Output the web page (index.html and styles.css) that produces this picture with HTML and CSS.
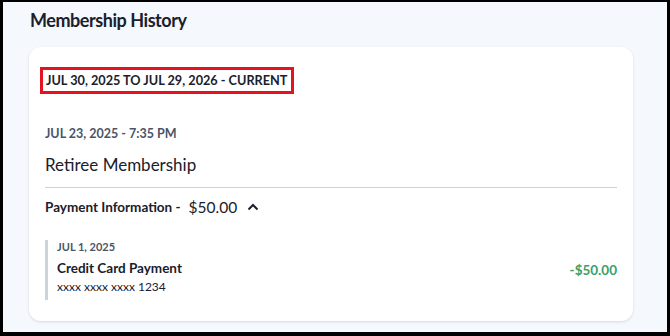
FILE: index.html
```html
<!DOCTYPE html>
<html>
<head>
<meta charset="utf-8">
<link rel="stylesheet" href="styles.css">
</head>
<body>
<div class="frame">
  <h1 class="title">Membership History</h1>
  <div class="card">
    <div class="period"><span class="period-text">JUL 30, 2025 TO JUL 29, 2026 - CURRENT</span></div>
    <div class="stamp">JUL 23, 2025 - 7:35 PM</div>
    <div class="plan">Retiree Membership</div>
    <div class="pay-head">
      <span class="pay-label">Payment Information -</span>
      <span class="pay-amount">$50.00</span>
      <svg class="chev" width="12" height="8" viewBox="0 0 12 8"><path d="M1.5 6.5 L6 2 L10.5 6.5" fill="none" stroke="#1a202c" stroke-width="2"/></svg>
    </div>
    <div class="txn">
      <div class="txn-info">
        <div class="txn-date">JUL 1, 2025</div>
        <div class="txn-name">Credit Card Payment</div>
        <div class="txn-card">xxxx xxxx xxxx 1234</div>
      </div>
      <div class="txn-amount">-$50.00</div>
    </div>
  </div>
</div>
</body>
</html>
```
FILE: styles.css
```css
html, body {
  margin: 0;
  padding: 0;
}
body {
  width: 670px;
  height: 336px;
  background: #000;
  font-family: "Lato", "Noto Sans", sans-serif;
  color: #1a202c;
}
.frame {
  box-sizing: border-box;
  margin: 2px 3px 0 3px;
  height: 330px;
  background: #f5f8fc;
  padding: 6px 34px 0 27px;
  overflow: hidden;
}
.title {
  margin: 0;
  font-size: 18px;
  font-weight: 700;
  line-height: 24px;
  color: #1a202c;
  letter-spacing: -0.45px;
}
.card {
  margin-top: 15px;
  margin-left: -1px;
  background: #fff;
  border-radius: 12px;
  box-shadow: 0 1px 3px rgba(0,0,0,0.12);
  height: 274px;
  box-sizing: border-box;
  padding: 20px 16px 0 16px;
}
.period {
  display: inline-block;
  margin-left: -5px;
  border: 3px solid #e3141f;
  padding: 2px 4px 3px 3px;
}
.period-text {
  font-size: 12.7px;
  font-weight: 700;
  line-height: 16px;
  display: block;
}
.stamp {
  margin-top: 32px;
  font-size: 12.5px;
  font-weight: 700;
  color: #4a5568;
  line-height: 16px;
}
.plan {
  margin-top: 12px;
  font-size: 17px;
  line-height: 22px;
  color: #1a202c;
  padding-bottom: 11px;
  border-bottom: 1px solid #cbd2dc;
}
.pay-head {
  display: flex;
  align-items: center;
  margin-top: 8px;
  height: 22px;
}
.pay-label {
  font-size: 13.5px;
  font-weight: 700;
}
.pay-amount {
  font-size: 15.5px;
  margin-left: 8px;
}
.chev {
  margin-left: 10px;
}
.txn {
  margin-top: 22px;
  display: flex;
  justify-content: space-between;
  border-left: 3px solid #cbd3df;
  padding-left: 9px;
}
.txn-info {
  padding: 0 0 5px 0;
}
.txn-date {
  font-size: 11px;
  font-weight: 700;
  color: #4a5568;
  line-height: 14px;
}
.txn-name {
  margin-top: 5px;
  font-size: 13.5px;
  font-weight: 700;
  line-height: 18px;
}
.txn-card {
  margin-top: 2px;
  font-size: 12px;
  line-height: 16px;
}
.txn-amount {
  align-self: center;
  font-size: 13.5px;
  font-weight: 700;
  color: #38a169;
}
```
